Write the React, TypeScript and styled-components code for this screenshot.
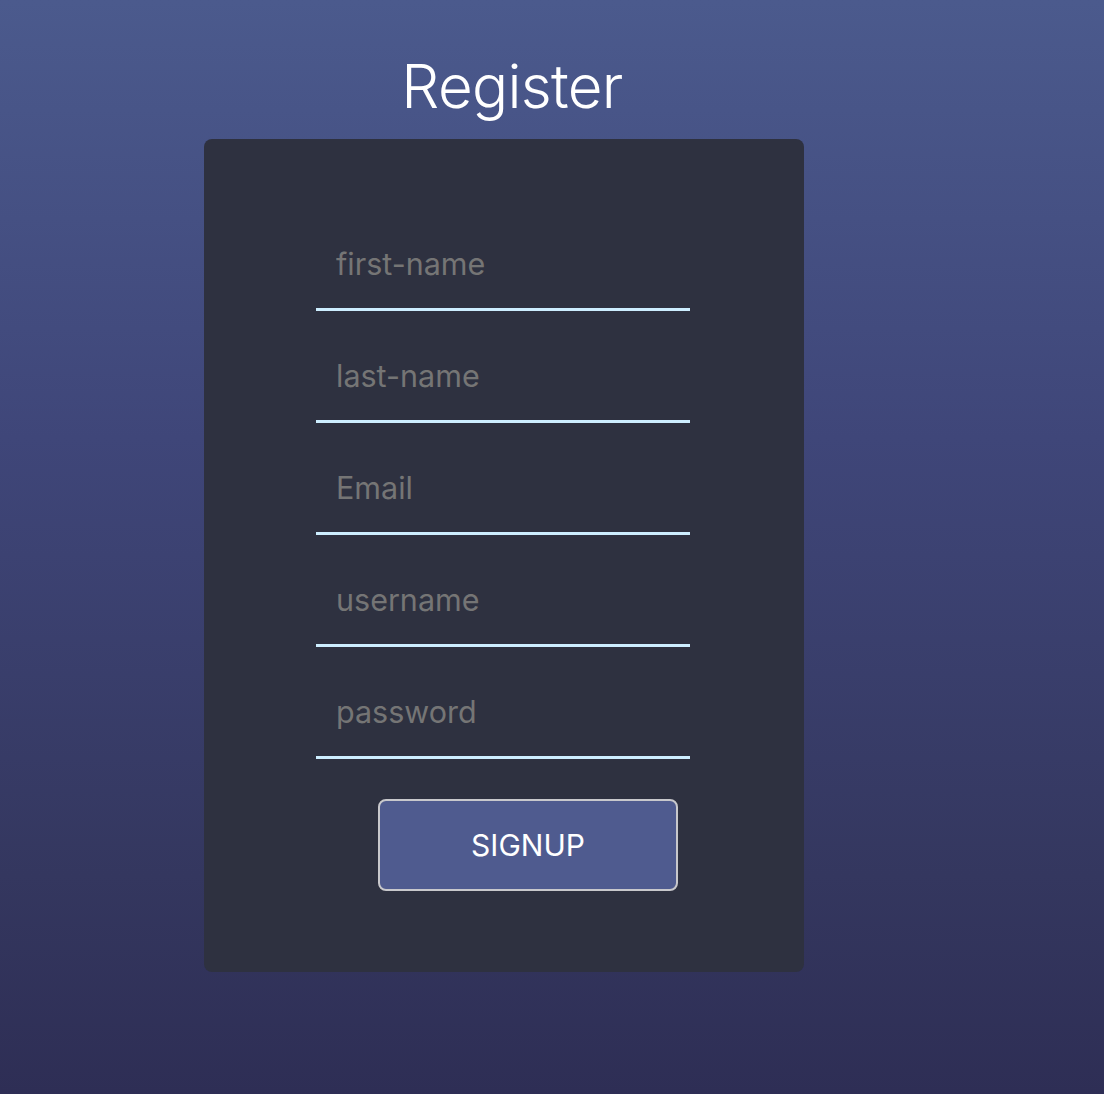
import React from "react";
import styled, { createGlobalStyle } from "styled-components";

const GlobalStyle = createGlobalStyle`
  html, body {
    margin: 0;
    padding: 0;
    min-height: 100%;
  }
  body {
    font-family: Inter, "Noto Sans", sans-serif;
    background: linear-gradient(180deg, #4b5a8d 0%, #3f4679 40%, #34375f 80%, #2e2e55 100%);
    min-height: 1094px;
  }
`;

const Page = styled.main`
  min-height: 1094px;
  padding-left: 204px;
  box-sizing: border-box;
  display: flex;
  flex-direction: column;
`;

const Title = styled.h1`
  width: 600px;
  margin: 0;
  padding: 50px 0 0 16px;
  box-sizing: border-box;
  height: 139px;
  text-align: center;
  font-family: Inter, sans-serif;
  font-weight: 300;
  font-size: 60px;
  line-height: 72px;
  color: #ffffff;
  letter-spacing: -0.7px;
`;

const Card = styled.form`
  width: 600px;
  box-sizing: border-box;
  background: #2e3140;
  border-radius: 8px;
  padding: 96px 0 81px 112px;
  display: flex;
  flex-direction: column;
  gap: 36px;
`;

const Field = styled.input`
  width: 374px;
  height: 76px;
  box-sizing: border-box;
  border: none;
  border-bottom: 3px solid #cdeeff;
  background: transparent;
  padding: 0 20px 16px;
  font-family: Inter, sans-serif;
  font-size: 30.5px;
  color: #e0e0e0;
  outline: none;
  &::placeholder {
    color: #757575;
  }
`;

const Button = styled.button`
  width: 300px;
  height: 92px;
  margin: 4px 0 0 62px;
  box-sizing: border-box;
  background: #4f5b8f;
  border: 2px solid #c8c8cc;
  border-radius: 8px;
  color: #ffffff;
  font-family: Inter, sans-serif;
  font-size: 30px;
  font-weight: 400;
  cursor: pointer;
`;

const fields = ["first-name", "last-name", "Email", "username", "password"];

export default function App() {
  return (
    <>
      <GlobalStyle />
      <Page>
        <Title>Register</Title>
        <Card onSubmit={(e) => e.preventDefault()}>
          {fields.map((f) => (
            <Field key={f} placeholder={f} type={f === "password" ? "password" : "text"} />
          ))}
          <Button type="submit">SIGNUP</Button>
        </Card>
      </Page>
    </>
  );
}
